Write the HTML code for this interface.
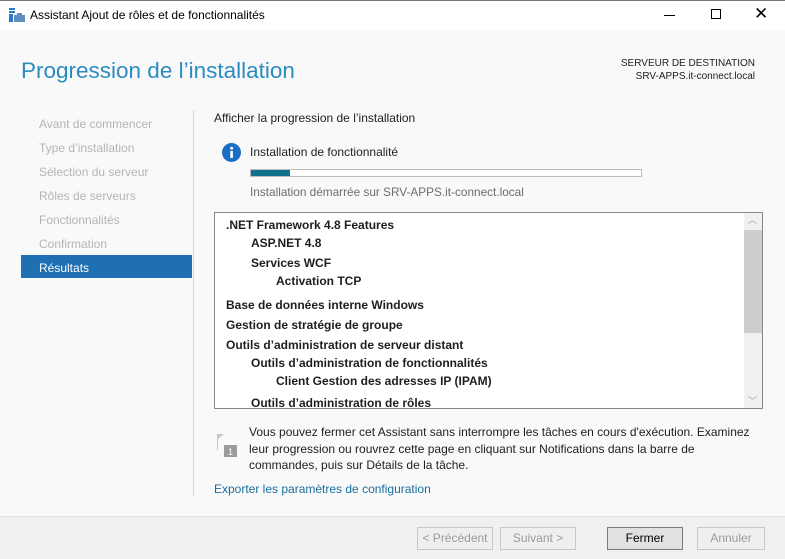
<!DOCTYPE html>
<html><head><meta charset="utf-8"><style>
*{margin:0;padding:0;box-sizing:border-box}
body{width:785px;height:559px;overflow:hidden;background:#f9f9f9;font-family:"Liberation Sans",sans-serif;font-size:12px;color:#1e1e1e;position:relative}
.a{position:absolute;white-space:nowrap}
.nav{color:#b4b4b4;font-size:12px}
.li{position:absolute;font-weight:bold;font-size:12px;color:#1e1e1e}
.btn{position:absolute;top:527px;height:23px;border:1px solid #c8c8c8;background:#efefef;color:#9a9a9a;text-align:center;line-height:21px;font-size:12px}
</style></head><body>
<div class="a" style="left:0;top:0;width:785px;height:31px;background:#fff"></div>
<div class="a" style="left:0;top:0;width:785px;height:1px;background:#777"></div>
<svg class="a" style="left:9px;top:8px" width="16" height="15"><rect x="0" y="0" width="6" height="2" fill="#2a7ac4"/><rect x="0" y="3" width="6" height="2" fill="#2a7ac4"/><rect x="0" y="6" width="4" height="8" fill="#2a7ac4"/><rect x="5" y="7" width="11" height="7" fill="#5d8fbf"/><rect x="8" y="5" width="5" height="2" fill="#5d8fbf"/></svg>
<div class="a" style="left:30px;top:8px;font-size:12px;color:#000">Assistant Ajout de rôles et de fonctionnalités</div>
<div class="a" style="left:664px;top:15px;width:11px;height:1px;background:#000"></div>
<div class="a" style="left:711px;top:9px;width:10px;height:10px;border:1px solid #000"></div>
<div class="a" style="left:754px;top:4px;font-size:17px;color:#000">✕</div>
<div class="a" style="left:21px;top:58px;font-size:22.5px;color:#2a8cc0">Progression de l’installation</div>
<div class="a" style="left:600px;top:57px;width:155px;text-align:right;font-size:10px;line-height:13px">SERVEUR DE DESTINATION<br>SRV-APPS.it-connect.local</div>
<div class="a nav" style="left:39px;top:117px">Avant de commencer</div>
<div class="a nav" style="left:39px;top:141px">Type d’installation</div>
<div class="a nav" style="left:39px;top:165px">Sélection du serveur</div>
<div class="a nav" style="left:39px;top:189px">Rôles de serveurs</div>
<div class="a nav" style="left:39px;top:213px">Fonctionnalités</div>
<div class="a nav" style="left:39px;top:237px">Confirmation</div>
<div class="a" style="left:21px;top:255px;width:171px;height:23px;background:#1e6fb3"></div>
<div class="a" style="left:39px;top:261px;color:#fff">Résultats</div>
<div class="a" style="left:193px;top:110px;width:1px;height:386px;background:#d6d6d6"></div>
<div class="a" style="left:214px;top:111px">Afficher la progression de l’installation</div>
<svg class="a" style="left:222px;top:143px" width="19" height="19"><circle cx="9.5" cy="9.5" r="9.5" fill="#1a6fc4"/><rect x="8.3" y="8" width="2.6" height="7" fill="#fff"/><circle cx="9.6" cy="5.2" r="1.5" fill="#fff"/></svg>
<div class="a" style="left:250px;top:145px">Installation de fonctionnalité</div>
<div class="a" style="left:250px;top:169px;width:392px;height:8px;border:1px solid #bcbcbc;background:#fff"></div>
<div class="a" style="left:251px;top:170px;width:39px;height:6px;background:#12708f"></div>
<div class="a" style="left:250px;top:185px;color:#6d6d6d;font-size:11.8px">Installation démarrée sur SRV-APPS.it-connect.local</div>
<div class="a" style="left:214px;top:212px;width:549px;height:197px;border:1px solid #828790;background:#fff"></div>
<div class="a" style="left:744px;top:213px;width:18px;height:195px;background:#f0f0f0"></div>
<div class="a" style="left:744px;top:230px;width:18px;height:103px;background:#cdcdcd"></div>
<div class="a" style="left:748px;top:213px;font-size:9px;color:#a0a0a0">︿</div>
<div class="a" style="left:748px;top:394px;font-size:9px;color:#a0a0a0">﹀</div>
<div class="li" style="left:226px;top:218px">.NET Framework 4.8 Features</div>
<div class="li" style="left:251px;top:236px">ASP.NET 4.8</div>
<div class="li" style="left:251px;top:256px">Services WCF</div>
<div class="li" style="left:276px;top:274px">Activation TCP</div>
<div class="li" style="left:226px;top:298px">Base de données interne Windows</div>
<div class="li" style="left:226px;top:318px">Gestion de stratégie de groupe</div>
<div class="li" style="left:226px;top:338px">Outils d’administration de serveur distant</div>
<div class="li" style="left:251px;top:356px">Outils d’administration de fonctionnalités</div>
<div class="li" style="left:276px;top:374px">Client Gestion des adresses IP (IPAM)</div>
<div class="li" style="left:251px;top:396px;height:12px;overflow:hidden">Outils d’administration de rôles</div>
<svg class="a" style="left:216px;top:433px" width="24" height="26"><path d="M1 1 L1 17 L2 17 L2 6 L8 1 Z" fill="#c8c8c8"/><rect x="8" y="12" width="13" height="12" fill="#9c9c9c"/><text x="12" y="22" font-size="9" fill="#fff" font-family="Liberation Sans">1</text></svg>
<div class="a" style="left:249px;top:424px;line-height:16.5px">Vous pouvez fermer cet Assistant sans interrompre les tâches en cours d'exécution. Examinez<br>leur progression ou rouvrez cette page en cliquant sur Notifications dans la barre de<br>commandes, puis sur Détails de la tâche.</div>
<div class="a" style="left:214px;top:482px;color:#1a6e9c">Exporter les paramètres de configuration</div>
<div class="a" style="left:0;top:516px;width:785px;height:43px;background:#f0f0f0;border-top:1px solid #dfdfdf"></div>
<div class="btn" style="left:417px;width:76px">&lt; Précédent</div>
<div class="btn" style="left:500px;width:76px">Suivant &gt;</div>
<div class="btn" style="left:607px;width:76px;border-color:#7a7a7a;background:#e1e1e1;color:#000">Fermer</div>
<div class="btn" style="left:697px;width:68px">Annuler</div>
</body></html>
